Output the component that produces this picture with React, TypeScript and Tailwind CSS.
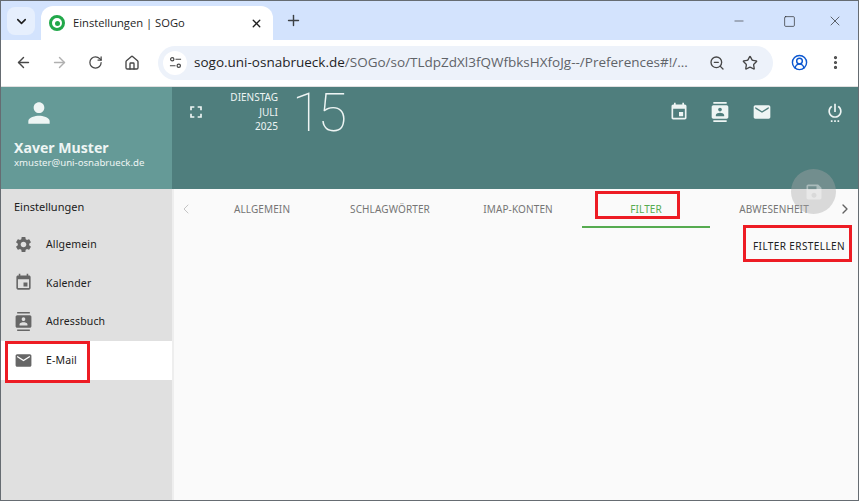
import { ArrowLeft, ArrowRight, ChevronDown, ChevronLeft, ChevronRight, CircleUserRound, EllipsisVertical, House, Minus, Plus, RotateCw, Square, Star, X, ZoomOut } from 'lucide-react';

const icons = {
  settings: 'M19.14 12.94c.04-.3.06-.61.06-.94 0-.32-.02-.64-.07-.94l2.03-1.58c.18-.14.23-.41.12-.61l-1.92-3.32c-.12-.22-.37-.29-.59-.22l-2.39.96c-.5-.38-1.03-.7-1.62-.94l-.36-2.54c-.04-.24-.24-.41-.48-.41h-3.84c-.24 0-.43.17-.47.41l-.36 2.54c-.59.24-1.13.57-1.62.94l-2.39-.96c-.22-.08-.47 0-.59.22L2.74 8.87c-.12.21-.08.47.12.61l2.03 1.58c-.05.3-.09.63-.09.94s.02.64.07.94l-2.03 1.58c-.18.14-.23.41-.12.61l1.92 3.32c.12.22.37.29.59.22l2.39-.96c.5.38 1.03.7 1.62.94l.36 2.54c.05.24.24.41.48.41h3.84c.24 0 .44-.17.47-.41l.36-2.54c.59-.24 1.13-.56 1.62-.94l2.39.96c.22.08.47 0 .59-.22l1.92-3.32c.12-.22.07-.47-.12-.61l-2.01-1.58zM12 15.6c-1.98 0-3.6-1.62-3.6-3.6s1.62-3.6 3.6-3.6 3.6 1.62 3.6 3.6-1.62 3.6-3.6 3.6z',
  event: 'M17 12h-5v5h5v-5zM16 1v2H8V1H6v2H5c-1.11 0-1.99.9-1.99 2L3 19c0 1.1.89 2 2 2h14c1.1 0 2-.9 2-2V5c0-1.1-.9-2-2-2h-1V1h-2zm3 18H5V8h14v11z',
  contacts: 'M20 0H4v2h16V0zM4 24h16v-2H4v2zM20 4H4c-1.1 0-2 .9-2 2v12c0 1.1.9 2 2 2h16c1.1 0 2-.9 2-2V6c0-1.1-.9-2-2-2zm-8 2.75c1.24 0 2.25 1.01 2.25 2.25s-1.01 2.25-2.25 2.25S9.75 10.24 9.75 9 10.76 6.75 12 6.75zM17 17H7v-1.5c0-1.67 3.33-2.5 5-2.5s5 .83 5 2.5V17z',
  email: 'M20 4H4c-1.1 0-1.99.9-1.99 2L2 18c0 1.1.9 2 2 2h16c1.1 0 2-.9 2-2V6c0-1.1-.9-2-2-2zm0 4l-8 5-8-5V6l8 5 8-5v2z',
  person: 'M12 12c2.21 0 4-1.79 4-4s-1.79-4-4-4-4 1.79-4 4 1.79 4 4 4zm0 2c-2.67 0-8 1.34-8 4v2h16v-2c0-2.66-5.33-4-8-4z',
  fullscreen: 'M7 14H5v5h5v-2H7v-3zm-2-4h2V7h3V5H5v5zm12 7h-3v2h5v-5h-2v3zM14 5v2h3v3h2V5h-5z',
  power: 'M7 24h2v-2H7v2zm4 0h2v-2h-2v2zm2-22h-2v10h2V2zm3.56 2.44l-1.45 1.45C16.84 6.94 18 8.83 18 11c0 3.31-2.69 6-6 6s-6-2.69-6-6c0-2.17 1.16-4.06 2.88-5.12L7.44 4.44C5.36 5.88 4 8.28 4 11c0 4.42 3.58 8 8 8s8-3.58 8-8c0-2.72-1.36-5.12-3.44-6.56zM15 24h2v-2h-2v2z',
  save: 'M17 3H5c-1.11 0-2 .9-2 2v14c0 1.1.89 2 2 2h14c1.1 0 2-.9 2-2V7l-4-4zm-5 16c-1.66 0-3-1.34-3-3s1.34-3 3-3 3 1.34 3 3-1.34 3-3 3zm3-10H5V5h10v4z',
};

const MdIcon = ({ d, className }: { d: string; className: string }) => (
  <svg viewBox="0 0 24 24" fill="currentColor" className={className}>
    <path d={d} />
  </svg>
);

const navItems = [
  { label: 'Allgemein', icon: icons.settings },
  { label: 'Kalender', icon: icons.event },
  { label: 'Adressbuch', icon: icons.contacts },
  { label: 'E-Mail', icon: icons.email, active: true },
];

const tabs = ['ALLGEMEIN', 'SCHLAGWÖRTER', 'IMAP-KONTEN', 'FILTER', 'ABWESENHEIT'];

const App = () => {
  return (
    <div className="relative flex h-[501px] w-[859px] flex-col overflow-hidden border border-[#666c72] bg-white font-['Open_Sans',sans-serif]">
      {/* Browser tab strip */}
      <div className="flex h-[39px] shrink-0 items-end bg-[#d3e3fd] pl-[6px]">
        <div className="mb-[5px] flex h-[28px] w-[28px] items-center justify-center rounded-lg bg-[#e6effd]">
          <ChevronDown size={15} strokeWidth={2.5} className="text-[#1f1f1f]" />
        </div>
        <div className="ml-[6px] flex h-[34px] w-[232px] items-center rounded-t-xl bg-white pl-[8px] pr-[10px]">
          <div className="flex h-[16px] w-[16px] items-center justify-center rounded-full border-[3px] border-[#22a84a]">
            <div className="h-[5px] w-[5px] rounded-full bg-[#22a84a]" />
          </div>
          <span className="ml-[8px] flex-1 text-[11.2px] text-[#1f1f1f]">Einstellungen | SOGo</span>
          <X size={13} strokeWidth={2.5} className="text-[#1f1f1f]" />
        </div>
        <Plus size={17} strokeWidth={2} className="mb-[11px] ml-[12px] text-[#3c4043]" />
        <div className="mb-[11px] ml-auto flex items-center text-[#1f1f1f]">
          <Minus size={14} strokeWidth={1} className="mr-[37px]" />
          <Square size={13} strokeWidth={1.2} className="mr-[31px]" />
          <X size={16} strokeWidth={1} className="mr-[15px]" />
        </div>
      </div>

      {/* Browser toolbar */}
      <div className="flex h-[47px] shrink-0 items-center rounded-t-lg border-b border-[#e0e0e0] bg-white pb-[1px] pl-[14px] pr-[14px] text-[#474747]">
        <ArrowLeft size={17} strokeWidth={2} />
        <ArrowRight size={17} strokeWidth={2} className="ml-[19px] text-[#b0b0b0]" />
        <RotateCw size={15} strokeWidth={2} className="ml-[20px]" />
        <House size={16} strokeWidth={2} className="ml-[21px]" />
        <div className="ml-[18px] flex h-[34px] w-[615px] items-center rounded-full bg-[#edf2fa] pl-[5px] pr-[15px]">
          <div className="flex h-[24px] w-[24px] items-center justify-center rounded-full bg-white">
            <svg viewBox="0 0 14 14" fill="none" stroke="#474747" strokeWidth="1.3" className="h-[13px] w-[13px]">
              <circle cx="3.5" cy="3.5" r="1.8" />
              <path d="M7 3.5h6M1 10.5h6" />
              <circle cx="10.5" cy="10.5" r="1.8" />
            </svg>
          </div>
          <span className="ml-[7px] whitespace-nowrap text-[13.5px] text-[#5f6368]">
            <span className="text-[#1f1f1f]">sogo.uni-osnabrueck.de</span>/SOGo/so/TLdpZdXl3fQWfbksHXfoJg--/Preferences#!/...
          </span>
          <ZoomOut size={16} strokeWidth={2} className="ml-auto" />
          <Star size={16} strokeWidth={2} className="ml-[17px]" />
        </div>
        <CircleUserRound size={17} strokeWidth={2} className="ml-[18px] text-[#0b57d0]" />
        <EllipsisVertical size={17} strokeWidth={2.5} className="ml-[19px]" />
      </div>

      {/* SOGo page */}
      <div className="flex min-h-0 flex-1 font-['Noto_Sans',sans-serif]">
        <aside className="flex w-[171px] shrink-0 flex-col bg-[#e0e0e0]">
          <div className="flex h-[102px] shrink-0 flex-col bg-[#659a97] pl-[13px] pt-[10px] text-[#eef5f4]">
            <MdIcon d={icons.person} className="ml-[9px] h-[32px] w-[32px]" />
            <div className="mt-[9px] text-[14.1px] font-bold leading-[19px]">Xaver Muster</div>
            <div className="-mt-[1px] text-[9.65px] leading-[13px]">xmuster@uni-osnabrueck.de</div>
          </div>
          <div className="pl-[13px] pt-[10px] text-[11px] leading-[16px] text-[#212121]">Einstellungen</div>
          <nav className="mt-[10px] flex flex-col">
            {navItems.map((item) => (
              <div
                key={item.label}
                className={`flex h-[38.67px] items-center pl-[13px] ${item.active ? 'bg-white' : ''}`}
              >
                <MdIcon d={item.icon} className="h-[19px] w-[19px] text-[#666666]" />
                <span className="ml-[13px] pt-[1px] text-[10.5px] tracking-[0.15px] text-[#212121]">{item.label}</span>
              </div>
            ))}
          </nav>
        </aside>

        <main className="flex min-w-0 flex-1 flex-col border-l-2 border-l-[#eeeeee] bg-[#fafafa]">
          <header className="-ml-[2px] flex h-[102px] shrink-0 items-start bg-[#4f7e7d] text-[#eef5f4]">
            <MdIcon d={icons.fullscreen} className="ml-[14px] mt-[15px] h-[20px] w-[20px]" />
            <div className="ml-[6px] mt-[3px] w-[66px] text-right text-[10px] leading-[14.5px]">
              <div>DIENSTAG</div>
              <div>JULI</div>
              <div>2025</div>
            </div>
            <div className="ml-[14px] mt-[1px] font-['Roboto',sans-serif] text-[54px] font-thin leading-[50px] tracking-[-4px]">15</div>
            <div className="ml-auto mt-[15px] flex items-center pr-[13px]">
              <MdIcon d={icons.event} className="h-[20px] w-[20px]" />
              <MdIcon d={icons.contacts} className="ml-[21px] h-[20px] w-[20px]" />
              <MdIcon d={icons.email} className="ml-[22px] h-[20px] w-[20px]" />
              <MdIcon d={icons.power} className="ml-[53px] h-[20px] w-[20px]" />
            </div>
          </header>

          <div className="flex h-[39px] shrink-0 items-center">
            <ChevronLeft size={16} strokeWidth={1.5} className="w-[24px] shrink-0 text-[#c4c4c4]" />
            <div className="flex min-w-0 flex-1 overflow-hidden">
              {tabs.map((tab) => (
                <div
                  key={tab}
                  className={`flex h-[39px] w-[128px] shrink-0 items-center justify-center border-b-2 pt-[3px] text-[10px] tracking-[0.12px] ${
                    tab === 'FILTER' ? 'border-[#56ab50] text-[#56ab50]' : 'border-transparent text-[#757575]'
                  }`}
                >
                  {tab}
                </div>
              ))}
            </div>
            <ChevronRight size={16} strokeWidth={2} className="mr-[4px] w-[18px] shrink-0 text-[#616161]" />
          </div>

          <div className="flex justify-end pr-[13px] pt-[11px] text-[10px] tracking-[0.4px] text-[#212121]">
            FILTER ERSTELLEN
          </div>
        </main>
      </div>

      {/* floating save button */}
      <div className="absolute left-[790px] top-[168px] flex h-[45px] w-[45px] items-center justify-center rounded-full bg-[#a8a8a8]/40">
        <MdIcon d={icons.save} className="h-[20px] w-[20px] text-white/40" />
      </div>

      {/* red annotation frames */}
      <div className="absolute left-[594px] top-[190px] h-[28px] w-[85px] border-[3px] border-[#ed1c24]" />
      <div className="absolute left-[742px] top-[224px] h-[37px] w-[109px] border-[3px] border-[#ed1c24]" />
      <div className="absolute left-[4px] top-[340px] h-[42px] w-[85px] border-[3px] border-[#ed1c24]" />
    </div>
  );
};

export default App;
